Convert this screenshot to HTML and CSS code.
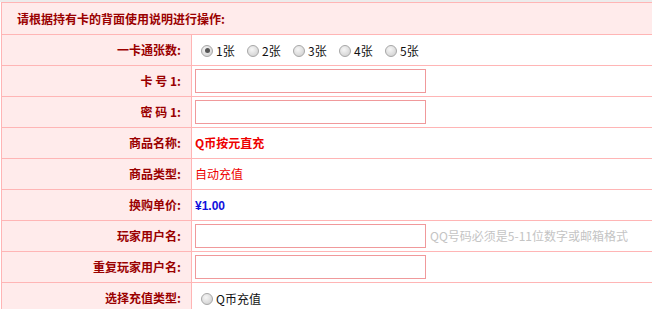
FILE: index.html
```html
<!DOCTYPE html>
<html lang="zh-CN">
<head>
<meta charset="utf-8">
<title>充值</title>
<link rel="stylesheet" href="styles.css">
</head>
<body>
<div class="wrap">
<table class="form">
  <colgroup>
    <col class="c-lbl">
    <col class="c-val">
  </colgroup>
  <tr class="r-head">
    <th colspan="2" class="head">请根据持有卡的背面使用说明进行操作:</th>
  </tr>
  <tr>
    <td class="lbl">一卡通张数:</td>
    <td class="val">
      <span class="radios">
        <label class="opt"><span class="radio on"></span>1张</label>
        <label class="opt"><span class="radio"></span>2张</label>
        <label class="opt"><span class="radio"></span>3张</label>
        <label class="opt"><span class="radio"></span>4张</label>
        <label class="opt"><span class="radio"></span>5张</label>
      </span>
    </td>
  </tr>
  <tr>
    <td class="lbl">卡 号 1:</td>
    <td class="val"><input class="txt" type="text"></td>
  </tr>
  <tr>
    <td class="lbl">密 码 1:</td>
    <td class="val"><input class="txt" type="password"></td>
  </tr>
  <tr>
    <td class="lbl">商品名称:</td>
    <td class="val"><span class="name">Q币按元直充</span></td>
  </tr>
  <tr>
    <td class="lbl">商品类型:</td>
    <td class="val"><span class="type">自动充值</span></td>
  </tr>
  <tr>
    <td class="lbl">换购单价:</td>
    <td class="val"><span class="price">¥1.00</span></td>
  </tr>
  <tr>
    <td class="lbl">玩家用户名:</td>
    <td class="val"><input class="txt" type="text"><span class="hint">QQ号码必须是5-11位数字或邮箱格式</span></td>
  </tr>
  <tr>
    <td class="lbl">重复玩家用户名:</td>
    <td class="val"><input class="txt" type="text"></td>
  </tr>
  <tr>
    <td class="lbl">选择充值类型:</td>
    <td class="val"><label class="opt wide"><span class="radio"></span>Q币充值</label></td>
  </tr>
</table>
</div>
</body>
</html>
```

FILE: styles.css
```css
html, body {
  margin: 0;
  padding: 0;
  background: #ffffff;
}
body {
  font-family: "Noto Sans CJK SC", "Microsoft YaHei", sans-serif;
  font-size: 12px;
  color: #000;
}
.wrap {
  padding: 2px 0 0 1px;
  background: linear-gradient(#ececec 0, #ececec 2px, #ffffff 2px);
}
.form {
  border-collapse: collapse;
  width: 760px;
  table-layout: fixed;
}
.c-lbl { width: 190px; }
.form th, .form td {
  border: 1px solid #ffb5b5;
  height: 31px;
  padding: 0 3px;
  line-height: 16px;
  white-space: nowrap;
  overflow: hidden;
  box-sizing: border-box;
}
.form tr.r-head th { height: 32px; }
.head {
  background: #ffebeb;
  color: #9a0000;
  font-weight: bold;
  text-align: left;
  padding-left: 15px !important;
}
.lbl {
  background: #ffebeb;
  color: #9a0000;
  font-weight: bold;
  text-align: right;
  padding-right: 10px !important;
}
.val {
  background: #fff;
  vertical-align: middle;
}
.txt {
  width: 231px;
  height: 24px;
  box-sizing: border-box;
  border: 1px solid #f0999b;
  margin: 0;
  padding: 0 3px;
  vertical-align: middle;
  font: inherit;
  outline: none;
}
.hint {
  color: #c4c4c4;
  margin-left: 4px;
  vertical-align: middle;
}
.radios {
  display: inline-flex;
  vertical-align: middle;
}
.opt {
  display: inline-flex;
  align-items: center;
  margin-left: 6px;
  width: 40px;
  color: #111;
  vertical-align: middle;
}
.opt.wide { width: auto; }
.radio {
  width: 12px;
  height: 12px;
  border-radius: 50%;
  border: 1px solid #a8a8a8;
  box-sizing: border-box;
  background: radial-gradient(circle at 40% 35%, #f6f6f6 0, #dcdcdc 60%, #c8c8c8 100%);
  margin-right: 3px;
  position: relative;
  flex: none;
}
.radio.on::after {
  content: "";
  position: absolute;
  left: 2.5px;
  top: 2.5px;
  width: 5px;
  height: 5px;
  border-radius: 50%;
  background: #555;
}
.name {
  color: #ee0000;
  font-weight: bold;
}
.type {
  color: #ee0000;
}
.price {
  color: #1111dd;
  font-weight: bold;
  font-family: "Liberation Sans", Arial, sans-serif;
}
```
